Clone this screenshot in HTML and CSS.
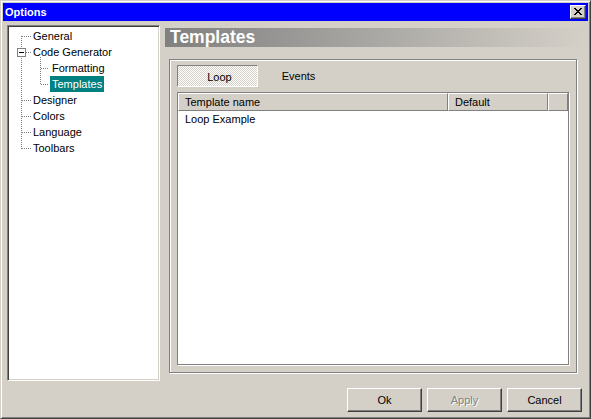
FILE: index.html
```html
<!DOCTYPE html>
<html>
<head>
<meta charset="utf-8">
<title>Options</title>
<link rel="stylesheet" href="styles.css">
</head>
<body>
<div class="window">
  <div class="titlebar">
    <span class="title">Options</span>
    <div class="close">
      <svg width="8" height="7" viewBox="0 0 8 7" shape-rendering="crispEdges">
        <path fill="#000" d="M0 0h2v1h-2zM6 0h2v1h-2zM1 1h2v1h-2zM5 1h2v1h-2zM2 2h4v1h-4zM3 3h2v1h-2zM2 4h4v1h-4zM1 5h2v1h-2zM5 5h2v1h-2zM0 6h2v1h-2zM6 6h2v1h-2z"/>
      </svg>
    </div>
  </div>
  <div class="main">
    <div class="tree">
      <svg class="tree-lines" width="150" height="130" viewBox="0 0 150 130" shape-rendering="crispEdges">
        <g stroke="#808080" stroke-width="1" stroke-dasharray="1 1" fill="none">
          <line x1="13.5" y1="10" x2="13.5" y2="123"/>
          <line x1="14" y1="10.5" x2="23" y2="10.5"/>
          <line x1="18" y1="26.5" x2="23" y2="26.5"/>
          <line x1="14" y1="74.5" x2="23" y2="74.5"/>
          <line x1="14" y1="90.5" x2="23" y2="90.5"/>
          <line x1="14" y1="106.5" x2="23" y2="106.5"/>
          <line x1="14" y1="122.5" x2="23" y2="122.5"/>
          <line x1="32.5" y1="31" x2="32.5" y2="59"/>
          <line x1="33" y1="42.5" x2="41" y2="42.5"/>
          <line x1="33" y1="58.5" x2="41" y2="58.5"/>
        </g>
        <rect x="9.5" y="22.5" width="8" height="8" fill="#fff" stroke="#808080"/>
        <rect x="11" y="26" width="5" height="1" fill="#000"/>
      </svg>
      <ul class="tree-list">
        <li class="node lvl1"><span class="label">General</span></li>
        <li class="node lvl1"><span class="label">Code Generator</span></li>
        <li class="node lvl2"><span class="label">Formatting</span></li>
        <li class="node lvl2"><span class="label selected">Templates</span></li>
        <li class="node lvl1"><span class="label">Designer</span></li>
        <li class="node lvl1"><span class="label">Colors</span></li>
        <li class="node lvl1"><span class="label">Language</span></li>
        <li class="node lvl1"><span class="label">Toolbars</span></li>
      </ul>
    </div>
    <div class="pane">
      <div class="pane-header">Templates</div>
      <div class="group">
        <div class="tabs">
          <div class="tab pressed">Loop</div>
          <div class="tab">Events</div>
        </div>
        <div class="list">
          <div class="list-head">
            <div class="col c1">Template name</div>
            <div class="col c2">Default</div>
            <div class="col c3"></div>
          </div>
          <div class="list-row">Loop Example</div>
        </div>
      </div>
    </div>
  </div>
  <div class="footer">
    <div class="btn">Ok</div>
    <div class="btn disabled">Apply</div>
    <div class="btn">Cancel</div>
  </div>
</div>
</body>
</html>
```
FILE: styles.css
```css
* { box-sizing: border-box; }
html, body { margin: 0; padding: 0; background: #d4d0c8; }
body {
  font-family: "Liberation Sans", Arial, sans-serif;
  font-size: 11px;
  color: #000;
}
.window {
  width: 591px;
  height: 419px;
  background: #d4d0c8;
  border: 1px solid;
  border-color: #d4d0c8 #404040 #404040 #d4d0c8;
  box-shadow: inset 1px 1px 0 #fff, inset -1px -1px 0 #808080;
  padding: 2px;
  display: flex;
  flex-direction: column;
}
.titlebar {
  height: 18px;
  background: #0000ff;
  display: flex;
  align-items: center;
  justify-content: space-between;
  padding: 0 2px 0 2px;
}
.title {
  color: #fff;
  font-weight: bold;
  line-height: 18px;
}
.close {
  width: 16px;
  height: 14px;
  background: #d4d0c8;
  border: 1px solid;
  border-color: #fff #404040 #404040 #fff;
  box-shadow: inset -1px -1px 0 #808080;
  display: flex;
  align-items: center;
  justify-content: center;
  padding: 0 0 1px 0;
}
.close svg { display: block; }
.main {
  display: flex;
  gap: 5px;
  padding: 4px 2px 0 4px;
  height: 360px;
}
.tree {
  position: relative;
  width: 153px;
  height: 356px;
  background: #fff;
  border: 1px solid;
  border-color: #808080 #fff #fff #808080;
  box-shadow: inset 1px 1px 0 #404040, inset -1px -1px 0 #d4d0c8;
}
.tree-lines {
  position: absolute;
  left: 0;
  top: 0;
  pointer-events: none;
}
.tree-list {
  list-style: none;
  margin: 0;
  padding: 2px 0 0 0;
  position: relative;
}
.node {
  height: 16px;
  line-height: 16px;
  display: flex;
}
.lvl1 { padding-left: 23px; }
.lvl2 { padding-left: 42px; }
.label {
  padding: 0 2px;
  white-space: nowrap;
}
.label.selected {
  background: #008080;
  color: #fff;
}
.pane {
  flex: 1;
  padding-top: 3px;
  display: flex;
  flex-direction: column;
}
.pane-header {
  height: 19px;
  line-height: 19px;
  padding-left: 5px;
  background: linear-gradient(to right, #808080, #d4d0c8);
  color: #fff;
  font-weight: bold;
  font-size: 17.5px;
}
.group {
  margin: 12px 9px 0 4px;
  height: 314px;
  border: 1px solid #808080;
  box-shadow: inset 1px 1px 0 #fff, 1px 1px 0 #fff;
  padding: 5px 0 0 7px;
}
.tabs {
  display: flex;
  height: 22px;
}
.tab {
  width: 81px;
  height: 22px;
  line-height: 22px;
  text-align: center;
}
.tab.pressed {
  border: 1px solid;
  border-color: #808080 #fff #fff #808080;
  background: repeating-conic-gradient(#fff 0 25%, #d4d0c8 0 50%) 0 0 / 2px 2px;
  line-height: 18px;
  padding: 2px 0 0 4px;
}
.list {
  margin-top: 5px;
  width: 392px;
  height: 273px;
  background: #fff;
  border: 1px solid #808080;
  box-shadow: 1px 1px 0 #fff;
}
.list-head {
  display: flex;
  height: 18px;
}
.col {
  height: 18px;
  background: #d4d0c8;
  border: 1px solid;
  border-color: #fff #808080 #808080 #fff;
  padding: 1px 0 0 6px;
  line-height: 14px;
  white-space: nowrap;
}
.c1 { width: 270px; }
.c2 { width: 100px; }
.c3 { flex: 1; }
.list-row {
  height: 16px;
  line-height: 15px;
  padding: 1px 0 0 7px;
}
.footer {
  display: flex;
  justify-content: flex-end;
  gap: 5px;
  padding: 7px 6px 0 0;
}
.btn {
  width: 75px;
  height: 24px;
  border: 1px solid;
  border-color: #fff #404040 #404040 #fff;
  box-shadow: inset -1px -1px 0 #808080;
  text-align: center;
  line-height: 22px;
}
.btn.disabled {
  color: #808080;
  text-shadow: 1px 1px 0 #fff;
}
```
